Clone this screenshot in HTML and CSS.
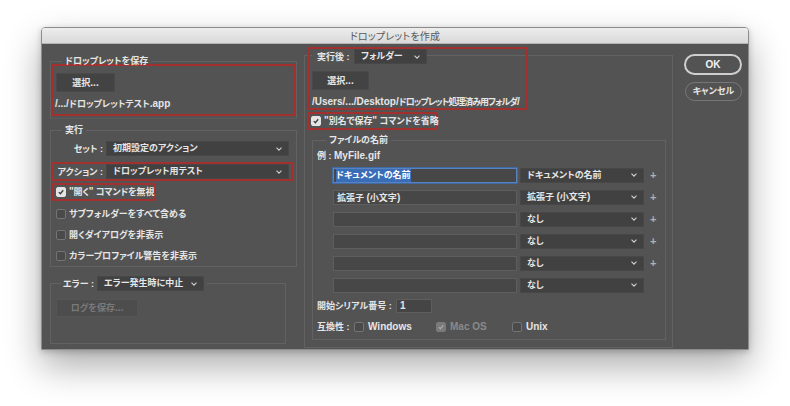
FILE: index.html
```html
<!DOCTYPE html>
<html lang="ja">
<head>
<meta charset="utf-8">
<title>ドロップレットを作成</title>
<link rel="stylesheet" href="styles.css">
</head>
<body>
<div class="window">
  <div class="titlebar">ドロップレットを作成</div>
  <div class="content">
    <div class="col-left">
      <fieldset class="group group-save">
        <legend class="legend">ドロップレットを保存</legend>
        <div class="redbox redbox-save">
          <div class="btn btn-choose">選択<span class="lat">...</span></div>
          <div class="path"><span class="lat">/.../</span>ドロップレットテスト<span class="lat">.app</span></div>
        </div>
      </fieldset>

      <fieldset class="group group-run">
        <legend class="legend">実行</legend>
        <div class="row row-set">
          <span class="row-label">セット :</span>
          <div class="select select-wide"><span>初期設定のアクション</span><svg class="chev" viewBox="0 0 6 4"><polyline points="0.5,0.7 3,3.2 5.5,0.7"/></svg></div>
        </div>
        <div class="redbox redbox-action">
          <span class="row-label">アクション :</span>
          <div class="select select-wide"><span>ドロップレット用テスト</span><svg class="chev" viewBox="0 0 6 4"><polyline points="0.5,0.7 3,3.2 5.5,0.7"/></svg></div>
        </div>
        <div class="redbox redbox-open">
          <span class="cb checked"><svg viewBox="0 0 10 10"><polyline points="2.2,5.2 4.2,7.2 7.8,2.8"/></svg></span>
          <span class="cb-text"><span class="lat">"</span>開く<span class="lat">"</span> コマンドを無視</span>
        </div>
        <div class="cb-row"><span class="cb"></span><span class="cb-text">サブフォルダーをすべて含める</span></div>
        <div class="cb-row"><span class="cb"></span><span class="cb-text">開くダイアログを非表示</span></div>
        <div class="cb-row"><span class="cb"></span><span class="cb-text">カラープロファイル警告を非表示</span></div>
      </fieldset>

      <fieldset class="group group-error">
        <legend class="legend legend-error">
          <span class="err-label">エラー :</span>
          <span class="select select-error"><span>エラー発生時に中止</span><svg class="chev" viewBox="0 0 6 4"><polyline points="0.5,0.7 3,3.2 5.5,0.7"/></svg></span>
        </legend>
        <div class="btn btn-log">ログを保存<span class="lat">...</span></div>
      </fieldset>
    </div>

    <div class="panel-right">
      <div class="redbox redbox-dest">
        <div class="dest-head">
          <span class="dest-label">実行後 :</span>
          <div class="select select-dest"><span>フォルダー</span><svg class="chev" viewBox="0 0 6 4"><polyline points="0.5,0.7 3,3.2 5.5,0.7"/></svg></div>
        </div>
        <div class="btn btn-choose2">選択<span class="lat">...</span></div>
        <div class="path path2"><span class="lat">/Users/.../Desktop/</span><span class="tight">ドロップレット処理済み用フォルダ</span><span class="lat">/</span></div>
      </div>
      <div class="redbox redbox-saveas">
        <span class="cb checked"><svg viewBox="0 0 10 10"><polyline points="2.2,5.2 4.2,7.2 7.8,2.8"/></svg></span>
        <span class="cb-text"><span class="lat">"</span>別名で保存<span class="lat">"</span> コマンドを省略</span>
      </div>

      <fieldset class="group group-name">
        <legend class="legend legend-name">ファイルの名前</legend>
        <div class="example">例 : <span class="lat">MyFile.gif</span></div>

        <div class="name-row">
          <div class="input input-name focused"><span class="sel">ドキュメントの名前</span></div>
          <div class="select select-name"><span>ドキュメントの名前</span><svg class="chev" viewBox="0 0 6 4"><polyline points="0.5,0.7 3,3.2 5.5,0.7"/></svg></div>
          <span class="plus">+</span>
        </div>
        <div class="name-row">
          <div class="input input-name">拡張子 <span class="lat">(</span>小文字<span class="lat">)</span></div>
          <div class="select select-name"><span>拡張子 <span class="lat">(</span>小文字<span class="lat">)</span></span><svg class="chev" viewBox="0 0 6 4"><polyline points="0.5,0.7 3,3.2 5.5,0.7"/></svg></div>
          <span class="plus">+</span>
        </div>
        <div class="name-row">
          <div class="input input-name"></div>
          <div class="select select-name"><span>なし</span><svg class="chev" viewBox="0 0 6 4"><polyline points="0.5,0.7 3,3.2 5.5,0.7"/></svg></div>
          <span class="plus">+</span>
        </div>
        <div class="name-row">
          <div class="input input-name"></div>
          <div class="select select-name"><span>なし</span><svg class="chev" viewBox="0 0 6 4"><polyline points="0.5,0.7 3,3.2 5.5,0.7"/></svg></div>
          <span class="plus">+</span>
        </div>
        <div class="name-row">
          <div class="input input-name"></div>
          <div class="select select-name"><span>なし</span><svg class="chev" viewBox="0 0 6 4"><polyline points="0.5,0.7 3,3.2 5.5,0.7"/></svg></div>
          <span class="plus">+</span>
        </div>
        <div class="name-row">
          <div class="input input-name"></div>
          <div class="select select-name"><span>なし</span><svg class="chev" viewBox="0 0 6 4"><polyline points="0.5,0.7 3,3.2 5.5,0.7"/></svg></div>
        </div>

        <div class="serial-row">
          <span class="serial-label">開始シリアル番号 :</span>
          <div class="input input-serial"><span class="lat">1</span></div>
        </div>
        <div class="compat-row">
          <span class="compat-label">互換性 :</span>
          <span class="opt opt-win"><span class="cb"></span><span class="cb-text lat">Windows</span></span>
          <span class="opt opt-mac disabled"><span class="cb checked"><svg viewBox="0 0 10 10"><polyline points="2.2,5.2 4.2,7.2 7.8,2.8"/></svg></span><span class="cb-text lat">Mac OS</span></span>
          <span class="opt opt-unix"><span class="cb"></span><span class="cb-text lat">Unix</span></span>
        </div>
      </fieldset>
    </div>

    <div class="col-buttons">
      <div class="pill pill-ok lat">OK</div>
      <div class="pill pill-cancel">キャンセル</div>
    </div>
  </div>
</div>
</body>
</html>
```

FILE: styles.css
```css
* { box-sizing: border-box; }

html, body {
  margin: 0;
  padding: 0;
  background: #ffffff;
  width: 790px;
  height: 406px;
  overflow: hidden;
}

body {
  font-family: "Liberation Sans", "Noto Sans CJK JP", sans-serif;
  font-size: 9px;
  font-feature-settings: "palt";
  color: #e6e6e6;
  font-weight: 700;
}

.lat {
  font-size: 10px;
}

.tight {
  letter-spacing: -1px;
}

.window {
  width: 708px;
  margin: 27px 0 0 41px;
  border: 1px solid #8c8c8c;
  border-radius: 4px 4px 0 0;
  box-shadow: 0 16px 36px rgba(0, 0, 0, 0.33), 0 2px 6px rgba(0, 0, 0, 0.2);
  overflow: hidden;
}

.titlebar {
  height: 16px;
  background: linear-gradient(#ededed, #d9d9d9);
  border-bottom: 1px solid #b4b4b4;
  color: #5a5a5a;
  font-weight: 400;
  font-size: 10px;
  line-height: 17px;
  text-align: center;
  letter-spacing: 0.2px;
}

.content {
  display: flex;
  height: 305px;
  background: #535353;
  padding-left: 8px;
}

/* ---------- generic ---------- */
.group {
  margin: 0;
  padding: 0;
  border: 1px solid #626262;
  min-width: 0;
}

.legend {
  padding: 0 3px;
  line-height: 12px;
  height: 12px;
}

.redbox {
  border: 2px solid #a3302e;
}

.btn {
  height: 19px;
  background: #434343;
  border: 1px solid #4a4a4a;
  text-align: center;
  line-height: 17px;
}

.path {
  line-height: 12px;
  white-space: nowrap;
}

.select {
  display: flex;
  align-items: center;
  justify-content: space-between;
  height: 15px;
  background: #414141;
  border: 1px solid #474747;
  padding: 0 6px 0 6px;
  line-height: 13px;
  white-space: nowrap;
}

.chev {
  width: 6px;
  height: 4px;
  flex: none;
  fill: none;
  stroke: #cfcfcf;
  stroke-width: 1.1;
}

.input {
  height: 15px;
  background: #474747;
  border: 1px solid #5e5e5e;
  line-height: 13px;
  padding: 0 3px;
  white-space: nowrap;
}

.cb {
  display: inline-flex;
  width: 10px;
  height: 10px;
  flex: none;
  background: #4a4a4a;
  border: 1px solid #747474;
  border-radius: 2px;
}

.cb svg {
  width: 100%;
  height: 100%;
  fill: none;
  stroke: #3a3a3a;
  stroke-width: 1.6;
}

.cb.checked {
  background: #e4e4e4;
  border-color: #e4e4e4;
}

.cb-text {
  white-space: nowrap;
  line-height: 12px;
}

/* ---------- left column ---------- */
.col-left {
  width: 247px;
  display: flex;
  flex-direction: column;
}

.group-save {
  margin-top: 11px;
  height: 64px;
  border-bottom-color: #5a5a5a;
}

.group-save .legend {
  margin-left: 11px;
}

.redbox-save {
  margin-top: -3px;
  height: 52px;
  padding: 7px 0 0 3px;
}

.btn-choose {
  width: 59px;
}

.redbox-save .path {
  margin-top: 6px;
  margin-left: -1px;
}

.group-run {
  margin-top: 5px;
  height: 143px;
}

.group-run .legend {
  margin-left: 11px;
}

.row {
  display: flex;
  align-items: center;
  margin-top: 5px;
}

.row-label {
  width: 52px;
  text-align: right;
  white-space: nowrap;
  line-height: 12px;
}

.select-wide {
  width: 183px;
  margin-left: 3px;
}

.redbox-action {
  display: flex;
  align-items: center;
  width: 242px;
  height: 19px;
  margin-top: 6px;
}

.redbox-action .row-label {
  width: 50px;
}

.redbox-open {
  display: flex;
  align-items: center;
  width: 105px;
  height: 18px;
  margin-top: 2px;
  padding-left: 3px;
}

.redbox-open .cb-text {
  margin-left: 3px;
  letter-spacing: -0.2px;
}

.cb-row .cb-text {
  margin-left: 3px;
}

.cb-row {
  display: flex;
  align-items: center;
  height: 21px;
  padding-left: 5px;
}

.redbox-open + .cb-row {
  margin-top: 2px;
}

.group-error {
  margin-top: 9px;
  width: 236px;
  height: 68px;
}

.legend-error {
  display: flex;
  align-items: center;
  height: 15px;
  padding: 0 3px 0 2px;
  margin-left: 10px;
}

.err-label {
  white-space: nowrap;
  line-height: 12px;
  width: 32px;
}

.select-error {
  width: 107px;
  margin-left: 2px;
}

.btn-log {
  width: 82px;
  height: 18px;
  line-height: 16px;
  margin: 8px 0 0 5px;
  background: #4d4d4d;
  border-color: #555555;
  color: #7a7a7a;
}

/* ---------- right panel ---------- */
.panel-right {
  width: 369px;
  height: 293px;
  margin: 11px 0 0 7px;
  border: 1px solid #626262;
  display: flex;
  flex-direction: column;
}

.redbox-dest {
  position: relative;
  width: 220px;
  height: 63px;
  margin: -9px 0 0 3px;
  padding-left: 2px;
}

.dest-head {
  display: flex;
  align-items: center;
  height: 15px;
}

.dest-label {
  background: #535353;
  padding: 0 4px 0 5px;
  line-height: 12px;
  width: 42px;
  white-space: nowrap;
}

.select-dest {
  width: 73px;
  margin-left: 0;
}

.btn-choose2 {
  width: 57px;
  margin-top: 7px;
}

.path2 {
  margin-top: 6px;
}

.redbox-saveas {
  display: flex;
  align-items: center;
  width: 130px;
  height: 18px;
  margin: 2px 0 0 3px;
  padding-left: 1px;
}

.redbox-saveas .cb-text {
  margin-left: 3px;
  letter-spacing: -0.1px;
}

.group-name {
  width: 354px;
  margin: 4px 0 0 7px;
  height: 206px;
  padding: 0 0 0 4px;
}

.legend-name {
  margin-left: 9px;
}

.example {
  line-height: 12px;
  margin-top: 4px;
  white-space: nowrap;
}

.name-row {
  display: flex;
  align-items: center;
  height: 22px;
  padding-left: 16px;
}

.example + .name-row {
  margin-top: 2px;
}

.input-name {
  width: 184px;
}

.input-name.focused {
  border: 1px solid #5a82bd;
  box-shadow: 0 0 0 1px #3f6aa6;
  padding: 0 2px;
}

.sel {
  background: #3a6db8;
  color: #ffffff;
  display: inline-block;
  line-height: 13px;
}

.select-name {
  width: 124px;
  margin-left: 3px;
}

.plus {
  margin-left: 6px;
  color: #b0b0b0;
  font-size: 11px;
  line-height: 12px;
}

.serial-row {
  display: flex;
  align-items: center;
  height: 16px;
  margin-top: 2px;
}

.serial-label {
  width: 79px;
  white-space: nowrap;
  line-height: 12px;
}

.input-serial {
  width: 36px;
  height: 14px;
  line-height: 12px;
  background: #454545;
}

.compat-row {
  display: flex;
  align-items: center;
  height: 16px;
  margin-top: 5px;
}

.compat-label {
  width: 37px;
  white-space: nowrap;
  line-height: 12px;
}

.opt {
  display: flex;
  align-items: center;
}

.opt .cb-text {
  margin-left: 4px;
}

.opt-win { width: 82px; }
.opt-mac { width: 76px; }

.opt.disabled .cb-text { color: #8a8a8a; }
.opt.disabled .cb.checked {
  background: #7a7a7a;
  border-color: #7a7a7a;
}
.opt.disabled .cb svg { stroke: #a8a8a8; }

/* ---------- buttons ---------- */
.col-buttons {
  width: 58px;
  margin-left: 11px;
  display: flex;
  flex-direction: column;
}

.pill {
  border-radius: 11px;
  text-align: center;
  white-space: nowrap;
}

.pill-ok {
  margin-top: 10px;
  height: 21px;
  border: 2px solid #cfcfcf;
  line-height: 17px;
  color: #f2f2f2;
}

.pill-cancel {
  margin: 7px 0 0 1px;
  width: 57px;
  height: 19px;
  border: 1px solid #777777;
  line-height: 17px;
  color: #e6e6e6;
}
```
